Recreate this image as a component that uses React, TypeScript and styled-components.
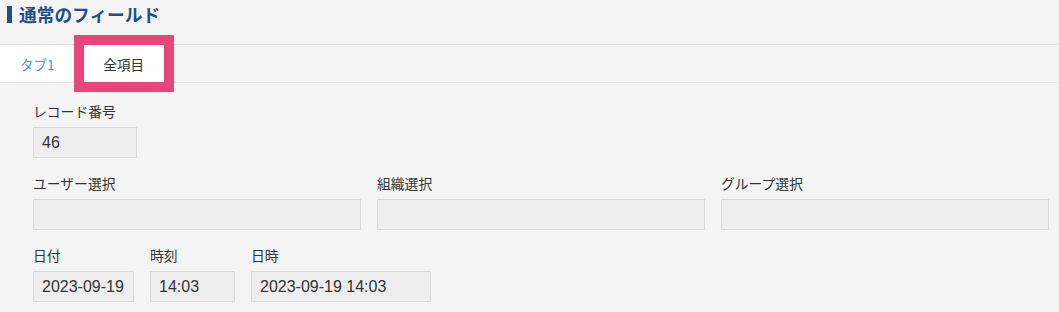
import React from "react";
import styled, { createGlobalStyle } from "styled-components";

const GlobalStyle = createGlobalStyle`
  body {
    margin: 0;
    background: #f4f4f4;
    font-family: "Liberation Sans", "Noto Sans CJK JP", sans-serif;
    color: #333;
  }
`;

const Page = styled.div`
  width: 1059px;
  height: 312px;
  overflow: hidden;
  background: #f4f4f4;
`;

const Header = styled.div`
  height: 44px;
  display: flex;
  align-items: flex-start;
  padding: 6px 0 0 7px;
  box-sizing: border-box;
`;

const Title = styled.h2`
  margin: 0;
  display: flex;
  align-items: center;
  gap: 7px;
  font-family: "Noto Sans CJK JP", sans-serif;
  font-size: 17.7px;
  font-weight: 700;
  line-height: 17px;
  color: #1b4f8e;

  &::before {
    content: "";
    display: block;
    width: 5px;
    height: 17px;
    background: #1b4f8e;
  }
`;

const TabBar = styled.div`
  display: flex;
  height: 39px;
  box-sizing: border-box;
  border-top: 1px solid #dcdce3;
  border-bottom: 1px solid #e3e3e3;
`;

const Tab = styled.div<{ active?: boolean; marked?: boolean }>`
  display: flex;
  align-items: center;
  justify-content: center;
  padding: 0 20px;
  background: #fff;
  font-family: "Noto Sans CJK JP", sans-serif;
  font-size: 13.5px;
  color: ${(p) => (p.active ? "#333" : "#4a96dc")};
  cursor: pointer;
  position: relative;
  margin-right: 9px;
  ${(p) => (p.marked ? "outline: 10px solid #e8457b;" : "")}
`;

const Content = styled.div`
  padding: 20px 10px 0 33px;
  display: flex;
  flex-direction: column;
  gap: 17px;
`;

const Row = styled.div`
  display: flex;
  gap: 16px;
`;

const Field = styled.div<{ w?: number }>`
  display: flex;
  flex-direction: column;
  gap: 8px;
  ${(p) => (p.w ? `width: ${p.w}px;` : "flex: 1;")}
`;

const Label = styled.label`
  font-family: "Noto Sans CJK JP", sans-serif;
  font-size: 13.8px;
  line-height: 16px;
  color: #333;
`;

const Input = styled.div`
  height: 31px;
  box-sizing: border-box;
  border: 1px solid #d8d8d8;
  background: #ededed;
  padding: 0 8px;
  display: flex;
  align-items: center;
  font-family: "Liberation Sans", "Noto Sans CJK JP", sans-serif;
  font-size: 16px;
  color: #333;
  white-space: nowrap;
  overflow: hidden;
`;

export default function App() {
  return (
    <Page>
      <GlobalStyle />
      <Header>
        <Title>通常のフィールド</Title>
      </Header>
      <TabBar>
        <Tab>タブ1</Tab>
        <Tab active marked>全項目</Tab>
      </TabBar>
      <Content>
        <Row>
          <Field w={104}>
            <Label>レコード番号</Label>
            <Input>46</Input>
          </Field>
        </Row>
        <Row>
          <Field>
            <Label>ユーザー選択</Label>
            <Input />
          </Field>
          <Field>
            <Label>組織選択</Label>
            <Input />
          </Field>
          <Field>
            <Label>グループ選択</Label>
            <Input />
          </Field>
        </Row>
        <Row>
          <Field w={101}>
            <Label>日付</Label>
            <Input>2023-09-19</Input>
          </Field>
          <Field w={85}>
            <Label>時刻</Label>
            <Input>14:03</Input>
          </Field>
          <Field w={180}>
            <Label>日時</Label>
            <Input>2023-09-19 14:03</Input>
          </Field>
        </Row>
      </Content>
    </Page>
  );
}
